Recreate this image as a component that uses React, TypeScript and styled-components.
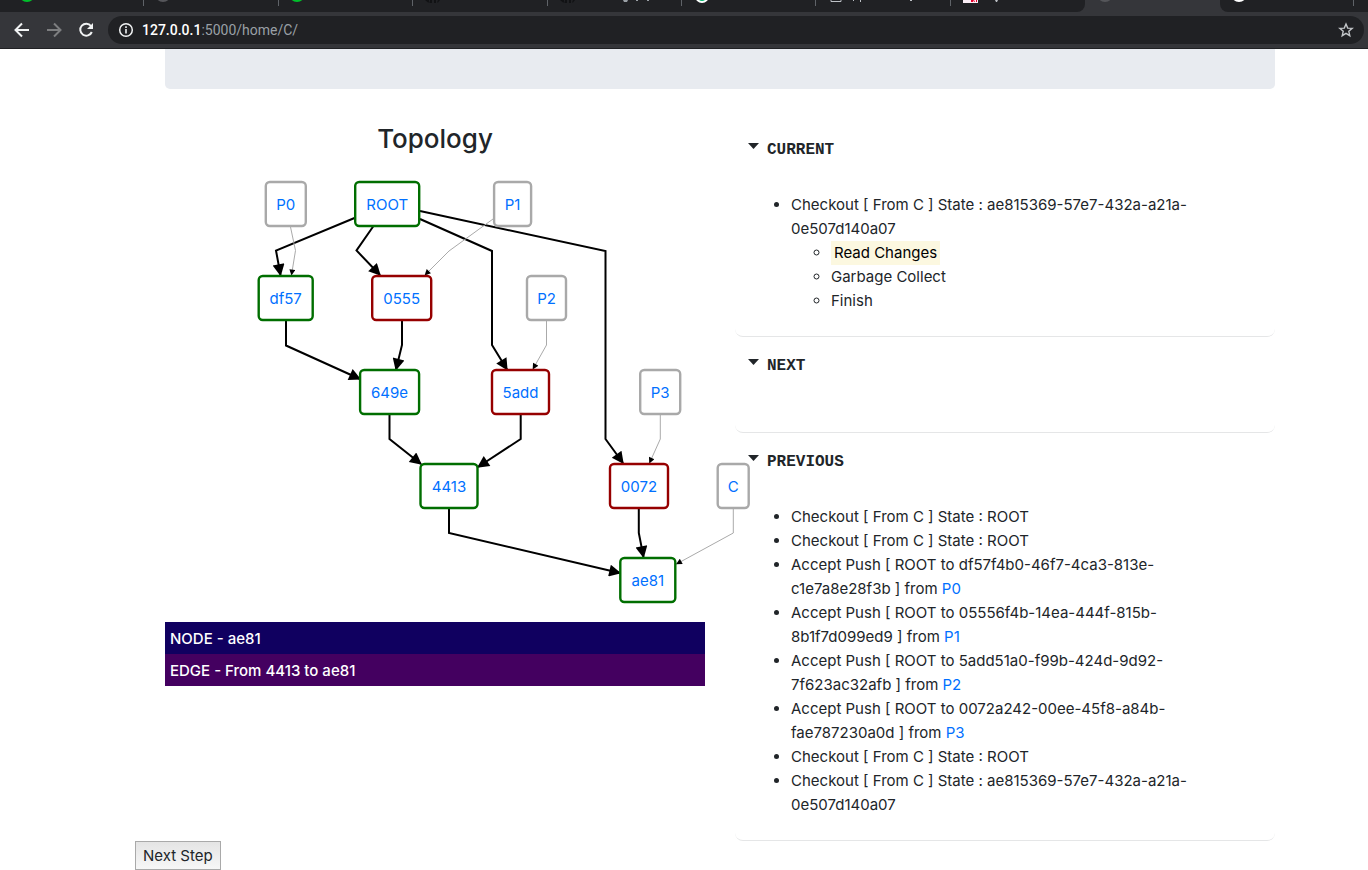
import React from "react";
import styled, { createGlobalStyle } from "styled-components";

const Global = createGlobalStyle`
  *, *::before, *::after { box-sizing: border-box; }
  body {
    margin: 0;
    background: #fff;
    color: #212529;
    font-family: Inter, "Liberation Sans", sans-serif;
    font-size: 15px;
    line-height: 24px;
  }
  a { color: #0070ff; text-decoration: none; }
`;

const Browser = styled.header`
  background: #35363a;
  border-bottom: 1px solid #202124;
`;

const TabStrip = styled.div`
  display: flex;
  height: 12px;
  overflow: hidden;
  background: #35363a;
`;

const Tab = styled.div<{ $active?: boolean; $edge?: "left" | "right"; $grow?: number; $last?: boolean }>`
  flex: ${(p) => p.$grow ?? 135} 1 0;
  height: 12px;
  background: ${(p) => (p.$active ? "#35363a" : "#202124")};
  border-radius: ${(p) => (p.$edge === "left" ? "0 0 8px 0" : p.$edge === "right" ? "0 0 0 8px" : "0")};
  display: flex;
  justify-content: space-between;
  &::after {
    content: "";
    width: 1px;
    height: 6px;
    background: ${(p) => (p.$active || p.$edge === "left" || p.$last ? "transparent" : "#5f6368")};
  }
`;

const Toolbar = styled.nav`
  display: flex;
  align-items: center;
  height: 36px;
  padding: 0 4px 0 12px;
  gap: 12px;
`;

const ToolButton = styled.button`
  display: flex;
  padding: 0;
  border: 0;
  background: none;
  color: #f1f3f4;
  &:disabled { color: #7d7e80; }
`;

const AddressBar = styled.div`
  display: flex;
  flex: 1;
  align-items: center;
  gap: 8px;
  height: 28px;
  padding: 0 10px;
  border-radius: 14px;
  background: #202124;
  color: #9aa0a6;
  font-size: 14px;
  line-height: 20px;
`;

const Address = styled.span`
  flex: 1;
  font-family: Roboto, sans-serif;
  b { color: #fff; font-weight: 500; }
`;

const Page = styled.main`
  padding: 0 93px 0 165px;
`;

const Banner = styled.div`
  height: 40px;
  border-radius: 0 0 5px 5px;
  background: #e8ebf0;
`;

const Columns = styled.div`
  display: grid;
  grid-template-columns: minmax(0, 1fr) minmax(0, 1fr);
  gap: 30px;
  margin-top: 32px;
`;

const Title = styled.h3`
  margin: 0 0 6px;
  font-size: 26px;
  line-height: 36px;
  font-weight: 500;
  text-align: center;
`;

const Graph = styled.svg`
  display: block;
  position: relative;
  width: 100%;
  height: 459px;
  overflow: visible;
  text { fill: #0070ff; font-size: 15px; text-anchor: middle; }
`;

const InfoBar = styled.div<{ $kind: "node" | "edge" }>`
  padding: 5px 5px 3px;
  background: ${(p) => (p.$kind === "node" ? "#100060" : "#440060")};
  color: #fff;
  font-size: 15px;
  font-weight: 500;
`;

const Card = styled.details`
  padding-top: 17px;
  border-bottom: 1px solid #e5e6e7;
  border-radius: 0 0 8px 8px;
`;

const Heading = styled.summary`
  display: flex;
  align-items: center;
  gap: 8px;
  padding-left: 13px;
  font-family: "Courier New", "Liberation Mono", monospace;
  font-size: 16px;
  font-weight: 700;
  list-style: none;
  cursor: pointer;
  svg { margin-bottom: 8px; }
`;

const CardBody = styled.div`
  padding: 31px 40px 23px 16px;
`;

const List = styled.ul`
  margin: 0;
  padding-left: 40px;
`;

const Mark = styled.mark`
  display: inline-block;
  padding: 0 3px;
  background: #fcf8e0;
  color: #000;
`;

const StepButton = styled.button`
  display: block;
  height: 29px;
  margin-left: -30px;
  padding: 0 7px;
  border: 1px solid #a9a9a9;
  border-radius: 0;
  background: linear-gradient(#e4e4e4, #f7f7f7);
  color: #212529;
  font: inherit;
`;

type Kind = "ok" | "conflict" | "pointer";
const strokes: Record<Kind, string> = { ok: "#006e00", conflict: "#960000", pointer: "#a9a9a9" };

const nodes: { id: string; x: number; y: number; w: number; kind: Kind }[] = [
  { id: "P0", x: 120.8, y: 41, w: 40, kind: "pointer" },
  { id: "ROOT", x: 222.2, y: 41, w: 64, kind: "ok" },
  { id: "P1", x: 347.6, y: 41, w: 37, kind: "pointer" },
  { id: "df57", x: 120.7, y: 135, w: 54, kind: "ok" },
  { id: "0555", x: 236.7, y: 135, w: 59, kind: "conflict" },
  { id: "P2", x: 381.5, y: 135, w: 39, kind: "pointer" },
  { id: "649e", x: 224.6, y: 229, w: 59, kind: "ok" },
  { id: "5add", x: 355.5, y: 229, w: 57, kind: "conflict" },
  { id: "P3", x: 495.2, y: 229, w: 40, kind: "pointer" },
  { id: "4413", x: 284, y: 323, w: 57, kind: "ok" },
  { id: "0072", x: 474, y: 323, w: 58, kind: "conflict" },
  { id: "C", x: 568.2, y: 323, w: 31, kind: "pointer" },
  { id: "ae81", x: 482.8, y: 417, w: 55, kind: "ok" },
];

const edges = [
  "M189.5 55L111 87.5L115.5 112",
  "M208.5 63L191.5 87.5L215 112",
  "M255 56L327 88L327 182L342 206.5",
  "M255 48L440.5 88L440.5 276L458 300",
  "M121 158L121 182.5L195 216",
  "M237 158L237 182L231 206.5",
  "M224.5 252L224.5 276L256 301",
  "M355.7 252L355.7 276L313 304",
  "M284 346L284 370L455 410",
  "M473.8 346L473.8 370L478.5 394",
];

const pointerEdges = [
  "M125.5 64L130.5 87.5L126.5 112",
  "M328 56L284 88L260 112",
  "M381.5 158L381.5 182L368 206",
  "M495.3 252L495.3 276L484.5 300",
  "M568.3 346L568.3 370L511.5 401",
];

const pushes = [
  ["df57f4b0-46f7-4ca3-813e-c1e7a8e28f3b", "P0"],
  ["05556f4b-14ea-444f-815b-8b1f7d099ed9", "P1"],
  ["5add51a0-f99b-424d-9d92-7f623ac32afb", "P2"],
  ["0072a242-00ee-45f8-a84b-fae787230a0d", "P3"],
];

function Topology() {
  return (
    <Graph role="img" aria-label="Topology">
      <defs>
        <marker id="arrow" viewBox="0 0 10 10" refX="9" refY="5" markerWidth="8" markerHeight="6" orient="auto">
          <path d="M0 0L10 5L0 10z" />
        </marker>
      </defs>
      <g fill="none" stroke="#000" strokeWidth="2">
        {edges.map((d) => <path key={d} d={d} markerEnd="url(#arrow)" />)}
      </g>
      <g fill="none" stroke="#aaa" strokeWidth="1">
        {pointerEdges.map((d) => <path key={d} d={d} markerEnd="url(#arrow)" />)}
      </g>
      {nodes.map((n) => (
        <a key={n.id} href={"#" + n.id}>
          <rect x={n.x - n.w / 2} y={n.y - 22} width={n.w} height="44" rx="4" fill="#fff" stroke={strokes[n.kind]} strokeWidth="2.4" />
          <text x={n.x} y={n.y + 6}>{n.id}</text>
        </a>
      ))}
    </Graph>
  );
}

function Section({ title, children }: { title: string; children?: React.ReactNode }) {
  return (
    <Card open>
      <Heading>
        <svg width="11" height="6" aria-hidden="true"><path d="M0 0H11L5.5 6z" fill="#212529" /></svg>
        {title}
      </Heading>
      <CardBody>{children}</CardBody>
    </Card>
  );
}

const Disc = ({ x, fill }: { x: number; fill: string }) => <circle cx={x} cy="-6" r="8" fill={fill} />;

const Cat = () => <path d="M12 0h4v1.500l2 1h-3zM17 0h2v3h-2zM21 0h2v3h-2zM25 0h2l-2 2.500h-1z" fill="#111214" />;

function BrowserChrome() {
  return (
    <Browser>
      <TabStrip>
        <Tab $grow={145}><svg width="60" height="12"><Disc x={27} fill="#00c02b" /></svg></Tab>
        <Tab><svg width="60" height="12"><Disc x={19} fill="#55565a" /></svg></Tab>
        <Tab><svg width="60" height="12"><Disc x={18} fill="#00c02b" /></svg></Tab>
        <Tab><svg width="60" height="12"><Cat /></svg></Tab>
        <Tab><svg width="110" height="12"><Cat /><path d="M75 0h5l-1 2h-3zM88 0h2v1h-2zM99 0h2v1h-2z" fill="#9aa0a6" /></svg></Tab>
        <Tab><svg width="60" height="12"><circle cx="20" cy="-4" r="7" fill="#fff" /><circle cx="20" cy="-4" r="5" fill="#00b56a" /></svg></Tab>
        <Tab><svg width="110" height="12"><path d="M15 -2V1.500H25V-2" fill="none" stroke="#bdc1c6" /><path d="M37 0h1v1h-1zM44 0h1v2h-1zM94 0h2v1h-2z" fill="#bdc1c6" /></svg></Tab>
        <Tab $edge="left"><svg width="60" height="12"><path d="M12 0h15v3H12z" fill="#fbeef6" /><path d="M20 0h2v2h-2zM22 0h1l1 2h1V0h1v2h-3z" fill="#e5002a" /><path d="M44 0h3l-1 2h-1z" fill="#bdc1c6" /></svg></Tab>
        <Tab $active><svg width="60" height="12"><Disc x={20} fill="#55565a" /></svg></Tab>
        <Tab $edge="right"><svg width="60" height="12"><Disc x={19} fill="#fff" /></svg></Tab>
        <Tab $grow={14} $last />
      </TabStrip>
      <Toolbar>
        <ToolButton aria-label="Back">
          <svg width="20" height="20" viewBox="0 0 20 20" fill="none" stroke="currentColor" strokeWidth="2"><path d="M17 10H4M10 3.500L3.500 10L10 16.500" /></svg>
        </ToolButton>
        <ToolButton aria-label="Forward" disabled>
          <svg width="20" height="20" viewBox="0 0 20 20" fill="none" stroke="currentColor" strokeWidth="2"><path d="M3 10H16M10 3.500L16.500 10L10 16.500" /></svg>
        </ToolButton>
        <ToolButton aria-label="Reload">
          <svg width="20" height="20" viewBox="0 0 20 20"><path d="M15 6A6 6 0 1 0 15.800 12" fill="none" stroke="currentColor" strokeWidth="2" /><path d="M17 3V9H11z" fill="currentColor" /></svg>
        </ToolButton>
        <AddressBar>
          <svg width="16" height="16" viewBox="0 0 16 16" aria-hidden="true"><circle cx="8" cy="8" r="6.300" fill="none" stroke="#f1f3f4" strokeWidth="1.500" /><path d="M8 7v4.500M8 4.200v1.800" stroke="#f1f3f4" strokeWidth="1.600" /></svg>
          <Address><b>127.0.0.1</b>:5000/home/C/</Address>
          <ToolButton aria-label="Bookmark this page">
            <svg width="16" height="16" viewBox="0 0 16 16"><path d="M8 2L9.700 6.100L14.200 6.400L10.800 9.300L11.800 13.700L8 11.400L4.200 13.700L5.200 9.300L1.800 6.400L6.300 6.100z" fill="none" stroke="#c4c7ca" strokeWidth="1.400" /></svg>
          </ToolButton>
        </AddressBar>
      </Toolbar>
    </Browser>
  );
}

export default function App() {
  return (
    <>
      <Global />
      <BrowserChrome />
      <Page>
        <Banner />
        <Columns>
          <section>
            <Title>Topology</Title>
            <Topology />
            <InfoBar $kind="node">NODE - ae81</InfoBar>
            <InfoBar $kind="edge">EDGE - From 4413 to ae81</InfoBar>
          </section>
          <section>
            <Section title="CURRENT">
              <List>
                <li>
                  Checkout [ From C ] State : ae815369-57e7-432a-a21a-0e507d140a07
                  <List>
                    <li><Mark>Read Changes</Mark></li>
                    <li>Garbage Collect</li>
                    <li>Finish</li>
                  </List>
                </li>
              </List>
            </Section>
            <Section title="NEXT" />
            <Section title="PREVIOUS">
              <List>
                <li>Checkout [ From C ] State : ROOT</li>
                <li>Checkout [ From C ] State : ROOT</li>
                {pushes.map(([hash, from]) => (
                  <li key={from}>{`Accept Push [ ROOT to ${hash} ] from `}<a href={"#" + from}>{from}</a></li>
                ))}
                <li>Checkout [ From C ] State : ROOT</li>
                <li>Checkout [ From C ] State : ae815369-57e7-432a-a21a-0e507d140a07</li>
              </List>
            </Section>
          </section>
        </Columns>
        <StepButton type="button">Next Step</StepButton>
      </Page>
    </>
  );
}
